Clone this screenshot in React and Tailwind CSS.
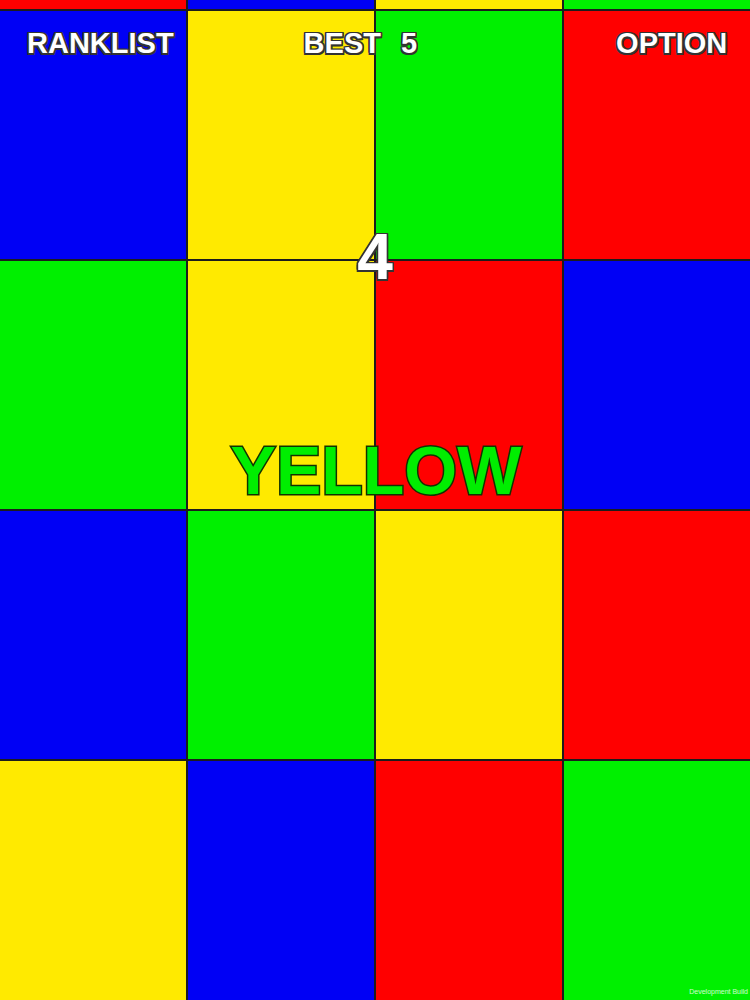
const B = 'bg-[#0000f5]';
const Y = 'bg-[#ffea00]';
const G = 'bg-[#00f000]';
const R = 'bg-[#ff0000]';

const rows = [
  [R, B, Y, G],
  [B, Y, G, R],
  [G, Y, R, B],
  [B, G, Y, R],
  [Y, B, R, G],
];

const outline =
  '[text-shadow:-1.5px_-1.5px_0_#333,1.5px_-1.5px_0_#333,-1.5px_1.5px_0_#333,1.5px_1.5px_0_#333,0_1.5px_0_#333,0_-1.5px_0_#333,1.5px_0_0_#333,-1.5px_0_0_#333]';

export default function App() {
  return (
    <div className="relative w-[750px] h-[1000px] overflow-hidden bg-[#1c1c1c] font-['Liberation_Sans',Arial,sans-serif]">
      <div className="grid grid-cols-4 grid-rows-[9px_248px_248px_248px_1fr] gap-[2px] h-full">
        {rows.flat().map((c, i) => (
          <div key={i} className={c} />
        ))}
      </div>

      {/* HUD over the board */}
      <div className="absolute inset-0 flex flex-col items-center pt-[26px] pb-[5px]">
        <div className={`self-stretch flex pl-[27px] text-white font-bold text-[29px] leading-[34px] ${outline}`}>
          <span>RANKLIST</span>
          <span className="ml-[130px] flex gap-[20px]">
            <span>BEST</span>
            <span>5</span>
          </span>
          <span className="ml-[199px]">OPTION</span>
        </div>

        <div className={`mt-[157px] text-white font-bold text-[64px] leading-[80px] ${outline}`}>4</div>

        <div className="mt-[131px] pl-[2px] font-bold text-[68px] leading-[84px] text-[#00ee00] [-webkit-text-stroke:3px_#123200] [paint-order:stroke_fill]">
          YELLOW
        </div>

        <div className="mt-auto self-end pr-[2px] text-[7px] leading-none text-white/80">Development Build</div>
      </div>
    </div>
  );
}
